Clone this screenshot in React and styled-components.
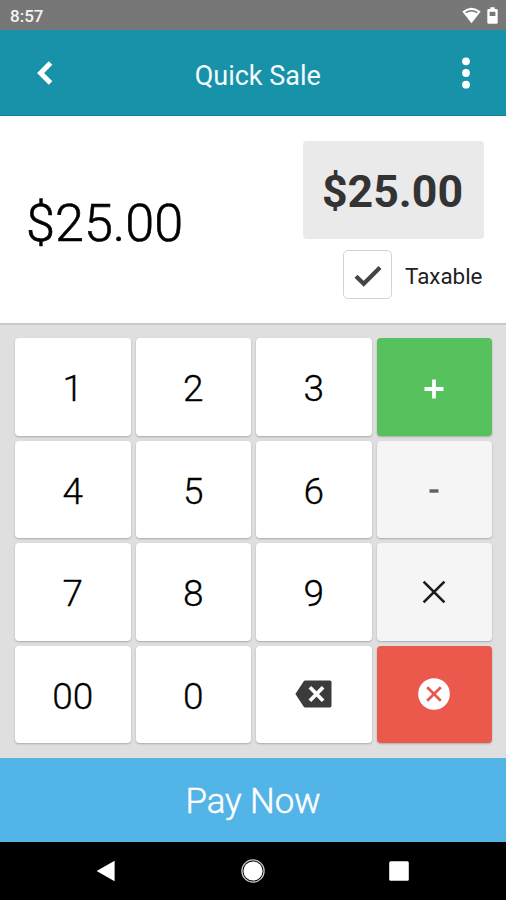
import styled, { createGlobalStyle } from 'styled-components'
import { useState } from 'react';

const GlobalStyle = createGlobalStyle`
  * {
    box-sizing: border-box;
  }
  body {
    margin: 0;
    background: #000;
    font-family: Roboto, "Liberation Sans", sans-serif;
  }
  button {
    font-family: inherit;
    border: none;
    padding: 0;
    cursor: pointer;
  }
  svg {
    display: block;
  }
`

const BackspaceIcon = () => (
  <svg width="37" height="28" viewBox="0 0 37 28">
    <path d="M10.2 0.5H34.8Q36.5 0.5 36.5 2.2V25.8Q36.5 27.5 34.8 27.5H10.2Q9.2 27.5 8.6 26.6L0.4 14L8.6 1.4Q9.2 0.5 10.2 0.5Z" fill="#3b3b3b" />
    <path d="M14.9 7.2L28.1 20.8M28.1 7.2L14.9 20.8" stroke="#fff" strokeWidth="3.8" />
  </svg>
)

const ClearIcon = () => (
  <svg width="32" height="32" viewBox="0 0 32 32">
    <circle cx="16" cy="16" r="15.8" fill="#fff" />
    <path d="M9.2 9.2L22.8 22.8M22.8 9.2L9.2 22.8" stroke="#e9574b" strokeWidth="2.7" />
  </svg>
)

const TimesIcon = () => (
  <svg width="24" height="24" viewBox="0 0 24 24">
    <path d="M1.6 1.6L22.4 22.4M22.4 1.6L1.6 22.4" stroke="#1c1c1c" strokeWidth="2.7" />
  </svg>
)

const PlusIcon = () => (
  <svg width="20" height="24" viewBox="0 0 20 24">
    <path d="M10 4.5V23.5M0.5 14H19.5" stroke="#fff" strokeWidth="3.8" />
  </svg>
)

const MinusIcon = () => (
  <svg width="10" height="8" viewBox="0 0 10 8">
    <path d="M0.5 6H9.5" stroke="#606060" strokeWidth="3.4" />
  </svg>
)

const keys = [
  { id: "1" },
  { id: "2" },
  { id: "3" },
  { id: "add", type: "add", icon: <PlusIcon /> },
  { id: "4" },
  { id: "5" },
  { id: "6" },
  { id: "minus", type: "operator", icon: <MinusIcon /> },
  { id: "7" },
  { id: "8" },
  { id: "9" },
  { id: "times", type: "operator", icon: <TimesIcon /> },
  { id: "00" },
  { id: "0" },
  { id: "back", icon: <BackspaceIcon /> },
  { id: "clear", type: "clear", icon: <ClearIcon /> },
];

const keyColors = {
  add: "#56c15d",
  operator: "#f5f5f5",
  clear: "#eb594d",
};

const App = () => {
const [cents, setCents] = useState(2500);
const [taxable, setTaxable] = useState(true);
const amount = "$" + (cents / 100).toFixed(2);

const pressKey = (id)=>{
  if(id==="clear"){
    return setCents(0)
  }
  if(id==="back"){
    return setCents(Math.floor(cents / 10))
  }
  if(/^\d+$/.test(id)){
    setCents(Number(String(cents) + id))
  }
}

  return <>
  <GlobalStyle />
  <Screen>
    <StatusBar>
      <span>8:57</span>
      <StatusIcons>
        <svg width="19" height="17" viewBox="0 0 19 17">
          <path d="M9.5 16.2L0.3 4.4Q9.5 -2.8 18.7 4.4Z" fill="#fff" />
          <path d="M3.6 5.6Q9.5 1.8 15.4 5.6" stroke="#777" strokeWidth="1.5" fill="none" />
        </svg>
        <svg width="11" height="17" viewBox="0 0 11 17">
          <path d="M3.3 0.3H7.7V2H9.3Q10.7 2 10.7 3.4V15.4Q10.7 16.8 9.3 16.8H1.7Q0.3 16.8 0.3 15.4V3.4Q0.3 2 1.7 2H3.3Z" fill="#fff" />
          <rect x="2.6" y="4.8" width="5.8" height="4.2" fill="#777" />
        </svg>
      </StatusIcons>
    </StatusBar>
    <Header>
      <HeaderButton aria-label="Back">
        <svg width="16" height="24" viewBox="0 0 16 24">
          <path d="M13.5 2L3.6 12L13.5 22" stroke="#fff" strokeWidth="5" fill="none" />
        </svg>
      </HeaderButton>
      <Title>Quick Sale</Title>
      <HeaderButton aria-label="More">
        <svg width="8" height="32" viewBox="0 0 8 32">
          <circle cx="4" cy="4.3" r="3.9" fill="#fff" />
          <circle cx="4" cy="16" r="3.9" fill="#fff" />
          <circle cx="4" cy="27.7" r="3.9" fill="#fff" />
        </svg>
      </HeaderButton>
    </Header>
    <Display>
      <Amount>{amount}</Amount>
      <Summary>
        <Total>{amount}</Total>
        <Taxable onClick={()=> setTaxable(!taxable)}>
          <Checkbox>
            {taxable && <svg width="28" height="22" viewBox="0 0 28 22">
              <path d="M2 11.2L9.7 18.7L26 2.4" stroke="#444" strokeWidth="4.2" fill="none" />
            </svg>}
          </Checkbox>
          <TaxLabel>Taxable</TaxLabel>
        </Taxable>
      </Summary>
    </Display>
    <Keypad>
      {keys.map((key)=> (
        <Key key={key.id} $type={key.type} onClick={()=> pressKey(key.id)}>
          {key.icon || key.id}
        </Key>
      ))}
    </Keypad>
    <PayButton>Pay Now</PayButton>
    <NavBar>
      <svg width="20" height="22" viewBox="0 0 20 22">
        <path d="M18.6 0.8V21.2L0.6 11Z" fill="#fff" />
      </svg>
      <svg width="24" height="24" viewBox="0 0 24 24">
        <circle cx="12" cy="12" r="11.1" fill="none" stroke="#c8c8c8" strokeWidth="1.3" />
        <circle cx="12" cy="12" r="9.6" fill="#fff" />
      </svg>
      <svg width="20" height="20" viewBox="0 0 20 20">
        <rect x="0.2" y="0.2" width="19.6" height="19.6" rx="1.5" fill="#fff" />
      </svg>
    </NavBar>
  </Screen>
  </>
  ;
};
export default App;

const Screen = styled.div`
  width: 506px;
  height: 900px;
  display: flex;
  flex-direction: column;
  overflow: hidden;
`
const StatusBar = styled.div`
  height: 29.6px;
  background: #777;
  color: #f4f4f4;
  display: flex;
  justify-content: space-between;
  align-items: center;
  padding: 3px 8px 0 10px;
  font-size: 17px;
  font-weight: 500;
`
const StatusIcons = styled.div`
  display: flex;
  gap: 6px;
  padding-bottom: 2px;
`
const Header = styled.header`
  height: 86.8px;
  background: #1892a9;
  border-bottom: 1.5px solid #11809a;
  display: flex;
  justify-content: space-between;
  align-items: center;
  padding: 2px 23.5px 0 29px;
`
const HeaderButton = styled.button`
  width: 32px;
  height: 48px;
  background: transparent;
  display: flex;
  justify-content: center;
  align-items: center;
`
const Title = styled.h1`
  margin: 5px 0 0 4px;
  color: #f4fbfc;
  font-size: 27px;
  font-weight: 400;
`
const Display = styled.section`
  height: 208.6px;
  background: #fff;
  border-bottom: 2px solid #c9c9c9;
  display: flex;
  justify-content: space-between;
  padding: 25px 22px 0 26px;
`
const Amount = styled.div`
  padding-top: 52px;
  line-height: 61px;
  font-size: 52.2px;
  font-weight: 300;
  -webkit-text-stroke: 0.6px #000;
  color: #000;
`
const Summary = styled.div`
  display: flex;
  flex-direction: column;
  align-items: flex-end;
  gap: 11px;
`
const Total = styled.div`
  width: 181px;
  height: 98px;
  background: #eaeaea;
  border-radius: 4px;
  display: flex;
  justify-content: center;
  align-items: center;
  padding: 4px 2px 0 0;
  font-size: 44.7px;
  font-weight: 700;
  color: #333;
`
const Taxable = styled.div`
  display: flex;
  align-items: center;
  gap: 13px;
  padding-right: 1.5px;
  font-size: 22.4px;
  color: #222;
  cursor: pointer;
`
const TaxLabel = styled.span`
  padding-top: 3px;
`
const Checkbox = styled.div`
  width: 49px;
  height: 49px;
  border: 1px solid #d4d4d4;
  border-radius: 5px;
  display: flex;
  justify-content: center;
  align-items: center;
  padding-top: 2px;
`
const Keypad = styled.section`
  height: 432.6px;
  background: #dfdfdf;
  display: grid;
  grid-template-columns: repeat(4, 1fr);
  grid-template-rows: repeat(4, 1fr);
  gap: 5px;
  padding: 13.2px 14px 14.6px 15px;
`
const Key = styled.button`
  background: ${({ $type }) => keyColors[$type] || "#fff"};
  border-radius: 4px;
  box-shadow: 0 1px 2px rgba(0, 0, 0, 0.24);
  display: flex;
  justify-content: center;
  align-items: center;
  padding-top: 4px;
  font-size: 37px;
  font-weight: 300;
  -webkit-text-stroke: 0.3px #000;
  color: #000;
  svg {
    margin-top: -4px;
  }
`
const PayButton = styled.button`
  height: 84px;
  background: #53b4e7;
  color: #fff;
  font-size: 34.8px;
  padding-top: 3px;
  font-weight: 300;
  -webkit-text-stroke: 0.5px #fff;
`
const NavBar = styled.nav`
  flex: 1;
  background: #000;
  display: flex;
  justify-content: space-between;
  align-items: center;
  padding: 0 97px 0 96px;
`
